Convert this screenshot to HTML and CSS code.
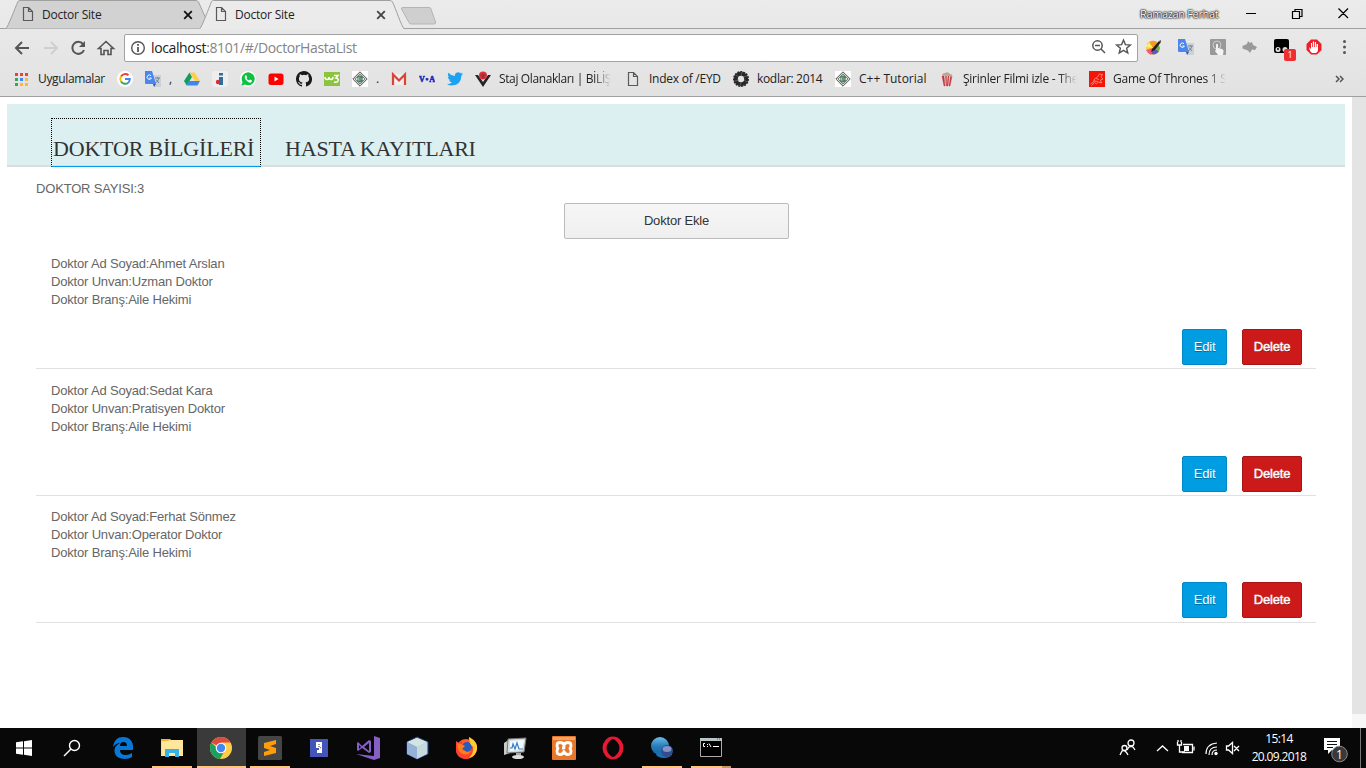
FILE: index.html
```html
<!DOCTYPE html>
<html lang="tr">
<head>
<meta charset="utf-8">
<title>Doctor Site</title>
<link rel="stylesheet" href="styles.css">
</head>
<body>
<svg class="defs" width="0" height="0">
  <symbol id="page" viewBox="0 0 12 14"><path d="M1.500 .5h5l4 4v9h-9zM6.500 .5v4h4" fill="none" stroke="#5a5a5a" stroke-width="1.200"/></symbol>
  <symbol id="x" viewBox="0 0 10 10"><path d="M1.200 1.200l7.600 7.600M8.800 1.200l-7.600 7.600" stroke="currentColor" stroke-width="1.800"/></symbol>
  <symbol id="translate" viewBox="0 0 16 16"><path d="M6 4h10v12H9z" fill="#ccd1d8"/><path d="M0 0h7l4 13H1Q0 13 0 12z" fill="#4a86ed"/><path d="M8 13h3l-2 3z" fill="#3059af"/><path d="M6 4.700A2.200 2.200 0 1 0 6.400 7H4.500" fill="none" stroke="#fff"/><path d="M10 7h5M12.500 6v1M14 7q-1 4-4 5M11 8.500l3 3.500" fill="none" stroke="#687b91" stroke-width=".9"/></symbol>
  <symbol id="cpp" viewBox="0 0 16 16"><path d="M0 0h16v16H0z" fill="#fff"/><path d="M8 .8L15.200 8 8 15.200 .8 8z" fill="#eee" stroke="#444" stroke-width=".9"/><path d="M8 2.800L13.200 8 8 13.200 2.800 8z" fill="#dce6df" stroke="#333" stroke-width=".7"/><path d="M5 5.500q3-2 6 0v5q-3 2-6 0z" fill="#548467"/><path d="M7.500 7h-1.500v2h1.500M8.500 8h1M10 8h1" stroke="#fff" stroke-width=".6" fill="none"/></symbol>
</svg>
<header class="browser">
  <div class="tabstrip">
    <svg class="tab-shapes" width="440" height="29">
      <path d="M6 28.500C8 27 15 8 18 1.500q.5-1 2-1h176q1.500 0 2.500 1.500l8 18-3.500 8.500" fill="#d2d2d2" stroke="#a0a0a0"/>
      <path d="M200 29c2-2 9-21 11.500-27.500q.5-1 2-1H390q1.500 0 2.500 1.500c3 6 9 24 11.500 27z" fill="#ebebeb"/>
      <path d="M200 28.500c2-2 9-20.500 11.500-27q.5-1 2-1H390q1.500 0 2.500 1.500c3 6 9 24.500 11.500 26.500" fill="none" stroke="#a0a0a0"/>
      <path d="M403 7.500h26q1.500 0 2 1.500l4.500 13q.5 2-1.500 2h-23q-1.500 0-2-1.500L401.500 9q-.5-1.500 1.500-1.500z" fill="#cfcfcf" stroke="#b5b5b5"/>
    </svg>
    <div class="tab"><svg class="page-icon"><use href="#page"/></svg><span>Doctor Site</span><svg class="close"><use href="#x"/></svg></div>
    <div class="tab tab-active"><svg class="page-icon"><use href="#page"/></svg><span>Doctor Site</span><svg class="close"><use href="#x"/></svg></div>
    <span class="user">Ramazan Ferhat</span>
    <svg class="window-controls" width="110" height="28" fill="none" stroke="#000"><path d="M4 13.500h10M50.500 11.500h7v7h-7zM53 11V9.500h7v7h-2M96.500 8.500l9.500 9.500M106 8.500L96.500 18" stroke-width="1.200"/></svg>
  </div>
  <div class="toolbar">
    <svg class="nav" width="104" height="18" viewBox="0 0 104 18" fill="none" stroke="#555" stroke-width="2">
      <path d="M15 9H2M8 3L2 9l6 6"/><path d="M30 9h12M37 3l6 6-6 6" stroke="#cfcfcf"/>
      <path d="M69 5a6 6 0 1 0 1 6"/><path d="M71 2v6h-6z" fill="#555" stroke="none"/>
      <path d="M84.500 9.500L92 2.500l7.500 7H97v6h-3v-4h-4v4h-3v-6z" stroke-width="1.600"/>
    </svg>
    <div class="address">
      <svg width="16" height="16" fill="none" stroke="#555" stroke-width="1.400"><circle cx="8" cy="8" r="6.300"/><path d="M8 7v5M8 4v1.700" stroke-width="1.800"/></svg>
      <span class="url"><b>localhost</b>:8101/#/DoctorHastaList</span>
      <svg class="address-actions" width="46" height="18" fill="none" stroke="#555" stroke-width="1.500"><circle cx="8.500" cy="7.500" r="4.700"/><path d="M12 11l4 4M6 7.500h5"/><path d="M34.500 2l1.900 4.600 5 .4-3.800 3.200 1.200 4.800-4.300-2.600-4.300 2.600 1.200-4.800-3.800-3.200 5-.4z" stroke-width="1.400"/></svg>
    </div>
    <div class="extensions">
      <svg viewBox="0 0 16 16"><circle cx="7" cy="9" r="6.800" fill="#ffc928"/><path d="M7 9L1 5A7 7 0 0 1 12 4z" fill="#f79a24"/><path d="M7 9L3 3l-3 5z" fill="#fff06a"/><path d="M7 9L5 15A7 7 0 0 0 13 12z" fill="#6554c0"/><path d="M7 9L0 11q2 4 5 5z" fill="#f05a78"/><path d="M12 4l2 5-1 3-4-2z" fill="#68b84a"/><path d="M6 10l7-8 2 1-6 8-4 2z" fill="#222"/><path d="M13 2l2-1v2z" fill="#555"/></svg>
      <svg><use href="#translate"/></svg>
      <svg viewBox="0 0 16 16"><rect width="16" height="16" rx="1" fill="#999"/><circle cx="7" cy="6" r="4" fill="none" stroke="#ccc"/><path d="M6 5.500q1-1.500 2 0V9l4 1q2 .5 1.500 2.500L13 16H8l-3-4q0-1.500 1-.5z" fill="#f3f3f3"/></svg>
      <svg viewBox="0 0 16 16"><path d="M.5 7L5 5l1-3 2 2 2-1 1 3 4 2-2 3-3-.5-2 3.500-2-2.500-3-1-2.500-1z" fill="#999"/></svg>
      <svg viewBox="0 0 16 16"><rect width="15" height="14" rx="2"/><circle cx="4" cy="10.500" r="2.500" fill="#ddd"/><circle cx="11" cy="10.500" r="2.500" fill="#ddd"/><circle cx="4" cy="10" r="1"/></svg>
      <svg viewBox="0 0 16 16"><path d="M5 .5h6L15.500 5v6L11 15.500H5L.5 11V5z" fill="#ed2027"/><path d="M5 4v6l-2-2 1 4 2 2h4q2-1 2-3V5h-1.500v3H10V3H8.800v5H8V2.500H6.800V8H6V4z" fill="#fff"/></svg>
      <svg viewBox="0 0 16 16" fill="#555"><circle cx="6.500" cy="2.500" r="1.500"/><circle cx="6.500" cy="8" r="1.500"/><circle cx="6.500" cy="13.500" r="1.500"/></svg>
      <span class="badge">1</span>
    </div>
  </div>
  <nav class="bookmarks">
    <svg class="apps" viewBox="0 0 13 13"><path d="M0 0h3v3H0zM5 0h3v3H5zM10 0h3v3h-3z" fill="#ee4035"/><path d="M0 5h3v3H0z" fill="#34a853"/><path d="M5 5h3v3H5z" fill="#4285f4"/><path d="M10 5h3v3h-3zM5 10h3v3H5zM10 10h3v3h-3z" fill="#f9bb2d"/><path d="M0 10h3v3H0z" fill="#34a853"/></svg>
    <span class="apps-label">Uygulamalar</span>
    <svg viewBox="0 0 16 16"><circle cx="8" cy="8" r="8" fill="#fff"/><g fill="none" stroke-width="2"><path d="M4 5.500a5 5 0 0 1 7.500-1.300" stroke="#ea4335"/><path d="M4 10.500a5 5 0 0 1 0-5" stroke="#fbbc05"/><path d="M11.300 11.700A5 5 0 0 1 4 10.500" stroke="#34a853"/><path d="M8 8h4.800q0 2.300-1.500 3.700" stroke="#4285f4"/></g></svg>
    <svg><use href="#translate"/></svg><span class="dot">,</span>
    <svg viewBox="0 0 16 16"><path d="M5.500 1.500L8 6 2.700 14.500 0 10z" fill="#169c5a"/><path d="M5.500 1.500h5L16 10h-5z" fill="#ffcf43"/><path d="M5 10h11l-2.500 4.500H2.700z" fill="#4285ed"/></svg>
    <svg viewBox="0 0 16 16"><rect width="16" height="16" rx="3" fill="#eee"/><path d="M7 2h4v2.500H7zM7 6h4v8H7z" fill="#316c9c"/><circle cx="6" cy="11" r="2.200" fill="#e22a32"/></svg>
    <svg viewBox="0 0 16 16"><circle cx="8" cy="8" r="8" fill="#fff"/><path d="M1.500 14.500l1-3.500A6.500 6.500 0 1 1 5 13.500z" fill="#0dc143"/><path d="M5 4.500l1.200-.3 1 2-.7 1q1 1.700 2.500 2.300l1-.9 2 1-.4 1.200Q10 12.800 7 10 4 7.500 5 4.500z" fill="#fff"/></svg>
    <svg viewBox="0 0 16 16"><rect x=".5" y="2.500" width="15" height="11.500" rx="2.500" fill="#f00"/><path d="M6.500 5.500v5l4-2.500z" fill="#fff"/></svg>
    <svg viewBox="0 0 16 16"><path d="M8 0C3.600 0 0 3.600 0 8c0 3.540 2.290 6.530 5.470 7.590.4.070.55-.17.550-.38v-1.490c-2 .37-2.530-.49-2.690-.94-.09-.23-.48-.94-.82-1.130-.28-.15-.68-.52-.01-.53.630-.01 1.080.58 1.230.82.720 1.210 1.870.87 2.330.66.070-.52.280-.87.510-1.070-1.780-.2-3.640-.89-3.640-3.950 0-.87.310-1.590.820-2.150-.08-.2-.36-1.020.08-2.120 0 0 .67-.21 2.200.82a7.600 7.600 0 0 1 4 0c1.530-1.040 2.200-.82 2.200-.82.440 1.100.16 1.920.08 2.120.510.560.820 1.270.820 2.150 0 3.070-1.870 3.750-3.650 3.950.290.250.540.730.540 1.480v2.200c0 .21.150.46.550.38A8 8 0 0 0 8 0z" fill="#161b1e"/></svg>
    <svg viewBox="0 0 16 16"><path d="M0 1h16v14H0z" fill="#8bc53f"/><path d="M1 6q0 2.500 2 2.500t2-2.500q0 2.500 2 2.500t2-2.500M10 4.500h4l-2 2.500q3 .5 2 3-1 2-4 1" fill="none" stroke="#fff" stroke-width="1.500"/></svg>
    <svg><use href="#cpp"/></svg><span class="dot">.</span>
    <svg viewBox="0 0 16 16"><path d="M1 3h14v11H1z" fill="#eee"/><path d="M2 14V3.500l6 6 6-6V14" fill="none" stroke="#d94436" stroke-width="2.200"/></svg>
    <svg viewBox="0 0 16 16"><text x="0" y="11" class="voa" textLength="16">V•A</text></svg>
    <svg viewBox="0 0 16 16"><path d="M0 13q3 0 5-1.500-2.300-.5-3-2.300h1.400Q.8 8 .8 5.600l1.500.4Q0 4 1.400 1.700q2.700 3.200 6.600 3.400Q7.500 1.600 11 1.200q1.500 0 2.500 1l2-.7-1.200 1.800L16 3l-1.600 1.700Q14 14 5 14.500 2 14.500 0 13z" fill="#1da1f2"/></svg>
    <svg viewBox="0 0 16 16"><path d="M0 4h3l5 7 5-7h3L8 16z" fill="#292426"/><circle cx="8" cy="4.500" r="4" fill="#df3440"/><path d="M5 4h6M6 6h4M8 2v6" stroke="#81252d" stroke-width=".7"/></svg>
    <span class="bookmark-label fade staj">Staj Olanakları | BİLİŞİ</span>
    <svg class="page-icon"><use href="#page"/></svg><span class="bookmark-label eyd">Index of /EYD</span>
    <svg viewBox="0 0 16 16"><circle cx="8" cy="8" r="5.200" fill="none" stroke="#292929" stroke-width="4"/><circle cx="8" cy="8" r="7.200" fill="none" stroke="#292929" stroke-width="1.600" stroke-dasharray="2 1"/><path d="M3 4l3 2M9 1l-1 4M14 5l-4 1M14 11l-3-2M7 15l1-4M2 10l4-1" stroke="#777" stroke-width=".6"/></svg><span class="bookmark-label kod">kodlar: 2014</span>
    <svg><use href="#cpp"/></svg><span class="bookmark-label tutorial">C++ Tutorial</span>
    <svg viewBox="0 0 16 16"><path d="M3 5h10l-2 10H5z" fill="#eee"/><path d="M3 5h2l1 10H5zM6.500 5h1v10H7zM9 5h1l-1 10H8zM11.500 5H13l-2 10h-1z" fill="#c2323a" stroke="#c2323a" stroke-width=".4"/><path d="M3 5q0-3 3-3 3-2 5 1 3 0 2 3-5-2-10-1z" fill="#b8a796"/></svg><span class="bookmark-label fade sirin">Şirinler Filmi izle - The</span>
    <svg viewBox="0 0 16 16"><path d="M0 0h16v16H0z" fill="#f31507"/><path d="M1.500 13l3-2 1-3 3-2 2-3 3 .5-1.500 2.500 2 2-2.500 1 1 3-3-1-2 2-2-1.500-3 3M7 7.500l3 1M5 10l4 .5" fill="none" stroke="#ff9a8c" stroke-width=".8"/></svg><span class="bookmark-label fade game">Game Of Thrones 1 S</span>
    <svg class="more" viewBox="0 0 9 8"><path d="M1 1l3 3-3 3M5 1l3 3-3 3" fill="none" stroke="#555" stroke-width="1.500"/></svg>
  </nav>
</header>
<main class="viewport">
  <div class="page">
    <nav class="menu"><a class="menu-item selected">DOKTOR BİLGİLERİ</a><a class="menu-item">HASTA KAYITLARI</a></nav>
    <section class="content">
      <p class="count">DOKTOR SAYISI:3</p>
      <button class="add">Doktor Ekle</button>
      <article class="doctor"><p>Doktor Ad Soyad:Ahmet Arslan<br>Doktor Unvan:Uzman Doktor<br>Doktor Branş:Aile Hekimi</p><div class="actions"><button class="edit">Edit</button><button class="delete">Delete</button></div></article>
      <article class="doctor second"><p>Doktor Ad Soyad:Sedat Kara<br>Doktor Unvan:Pratisyen Doktor<br>Doktor Branş:Aile Hekimi</p><div class="actions"><button class="edit">Edit</button><button class="delete">Delete</button></div></article>
      <article class="doctor third"><p>Doktor Ad Soyad:Ferhat Sönmez<br>Doktor Unvan:Operator Doktor<br>Doktor Branş:Aile Hekimi</p><div class="actions"><button class="edit">Edit</button><button class="delete">Delete</button></div></article>
    </section>
  </div>
  <div class="scrollbar"><div class="track"></div></div>
</main>
<footer class="taskbar">
  <div class="task start"><svg width="16" height="16" fill="#fff"><path d="M0 2.300L7 1.300V7.500H0zM8 1.200L16 0v7.500H8zM0 8.500h7v6.200l-7-1zM8 8.500h8V16l-8-1.200z"/></svg></div>
  <div class="task search"><svg width="18" height="18" fill="none" stroke="#fff" stroke-width="1.400"><circle cx="11.500" cy="6.500" r="5"/><path d="M8 10l-7 7"/></svg></div>
  <div class="task"><svg viewBox="0 0 24 24"><path d="M2 11C3 4 7 1 12 1c7 0 10 5 10 9v4H9c0 3 2 5 6 5q3 0 6-2v4q-3 2-7 2C7 23 3 19 3.500 14 4 10 7 8 9 7q-4 0-7 4zm7-1h7q0-4-3.500-4T9 10z" fill="#0878d7"/></svg></div>
  <div class="task open"><svg viewBox="0 0 24 24"><path d="M1 3h9l2 2h11v15H1z" fill="#f9dc83"/><path d="M1 3h9v2H1z" fill="#eab72e"/><path d="M2 6l9-2h12v16H2z" fill="#fee69a"/><path d="M5 21v-8h14v8h-4v-4H9v4z" fill="#38b1e6"/></svg></div>
  <div class="task open focused"><svg viewBox="0 0 24 24"><circle cx="12" cy="12" r="11" fill="#ffcd46"/><path d="M12 12L2.500 6.500A11 11 0 0 1 21.500 6.500H12z" fill="#dd4b3e"/><path d="M2.500 6.500A11 11 0 0 0 11 23l5-9-4 2z" fill="#1aa15f"/><circle cx="12" cy="12" r="5.300" fill="#fff"/><circle cx="12" cy="12" r="4.200" fill="#4387f5"/></svg></div>
  <div class="task open"><svg viewBox="0 0 24 24"><rect width="24" height="24" rx="1.500" fill="#454545"/><path d="M6 7l12-3v4l-6 2 6 2v5L6 20v-4l6-2-6-2z" fill="#ff9c08"/></svg></div>
  <div class="task"><svg viewBox="0 0 24 24"><path d="M3 3h18v18H3z" fill="#4355ba"/><path d="M9 6h6v11h-5v-3h2v-2H9z" fill="#fff"/><path d="M12 8v3l2 1" stroke="#333" fill="none" stroke-dasharray="1 1"/></svg></div>
  <div class="task"><svg viewBox="0 0 24 24"><path d="M18 0l6 2v20l-6 2L0 18l18 2z" fill="#865fc5"/><path d="M2 6l4 4 7-6 2 1v11l-2 1-7-5-4 3-1-1V7zm1 3v4l2-2zm5 2l5 4V7z" fill="#865fc5" fill-rule="evenodd"/></svg></div>
  <div class="task"><svg viewBox="0 0 24 24"><path d="M12 1l11 5v12l-11 5-10-5V6z" fill="#a7c1df" stroke="#263d87"/><path d="M2 6l10-4 10 4-10 5z" fill="#d2e5df"/><path d="M12 11l10-5v12l-10 5z" fill="#c5d9df"/><path d="M2 6l10 5v12L2 18z" fill="#96b1d6"/></svg></div>
  <div class="task"><svg viewBox="0 0 24 24"><circle cx="12" cy="13" r="10" fill="#ff5b2c"/><path d="M2 14V5l3 2 3-3v4l5 2-3 3 4 3q4 0 4-5c0-4-4-5-3-10 6 3 9 7 8 13-1 5-6 9-11 9-6 0-10-4-10-9z" fill="#ff412e"/><circle cx="13" cy="11" r="5" fill="#275bbd"/><path d="M15 1q9 5 8 12-1 7-8 9 5-5 4-11-4-3-4-10z" fill="#ffcc2d"/><path d="M3 7l4 1 4 2-3 3 5 3q3 0 4-2-2 6-8 4-6-2-6-11z" fill="#ff7c1c"/></svg></div>
  <div class="task"><svg viewBox="0 0 24 24"><path d="M1 7l6-4v14l-6 2z" fill="#c8cbc6"/><path d="M5 3l18-1-2 14-17 1z" fill="#d5dcdc" stroke="#777"/><path d="M7 5l14-1-2 10-12 1z" fill="#f0fbff"/><path d="M7 12h2l1-4 2 5 2-6 2 6h4" fill="none" stroke="#397cc0" stroke-width="1.200"/><path d="M13 17h5v3h-5z" fill="#aaa"/><ellipse cx="15" cy="21" rx="6" ry="2" fill="#ddd"/></svg></div>
  <div class="task"><svg viewBox="0 0 24 24"><rect width="24" height="24" rx="1" fill="#e9772a"/><path d="M1 1h22v3H1z" fill="#f6a365"/><path d="M12 9Q11 6.500 8 6.500q-3 0-3 3 0 1.500 1 3-1 1-1 3 0 3 3 3t4-3q1 3 4 3t3-3q0-2-1-3 1-1.500 1-3 0-3-3-3t-4 2.500v3h-2" fill="none" stroke="#fff" stroke-width="2.800" stroke-linejoin="round"/></svg></div>
  <div class="task"><svg viewBox="0 0 24 24"><ellipse cx="12" cy="12" rx="8.500" ry="9.500" fill="none" stroke="#e61932" stroke-width="4"/><ellipse cx="12" cy="12" rx="5" ry="9" fill="#080808"/></svg></div>
  <div class="task open"><svg viewBox="0 0 24 24"><defs><linearGradient id="blue" x2="0" y2="1"><stop stop-color="#6cbceb"/><stop offset=".5" stop-color="#297eb9"/><stop offset="1" stop-color="#1661a1"/></linearGradient></defs><circle cx="10" cy="10" r="9" fill="url(#blue)"/><ellipse cx="14" cy="18" rx="8" ry="4" fill="#1c70b1"/><circle cx="17" cy="15" r="6" fill="#334c91"/><ellipse cx="17" cy="13" rx="4.500" ry="3" fill="#8193c7"/></svg></div>
  <div class="task open terminal"><svg viewBox="0 0 24 24"><path d="M1.500 2.500h21v18h-21z" fill="#000" stroke="#aaa"/><path d="M1 2h22v3H1z" fill="#b9c4c7"/><path d="M6 7.500H4.500v3H6M8.500 8v1M8.500 10v1M10 7.500l2 3.500M14 10.500h6" fill="none" stroke="#fff"/><path d="M18 3h1M20 3h1" stroke="#555"/></svg></div>
  <svg class="tray" width="128" height="24" fill="none" stroke="#fff" stroke-width="1.300"><circle cx="14" cy="7" r="3"/><path d="M10 14l2-3q2-1 4 0l2 3M3 19l2-4q3-2 6 4"/><circle cx="7.500" cy="12" r="2.500"/><path d="M40 15l5.500-5 5.500 5M66 8.500h9.500v8H65"/><path d="M67 10h5v5h-5z" fill="#fff" stroke="none"/><path d="M60.500 6v3h4V6M62.500 9v7H68M61 6V4M64 6V4M77 10.500v4"/><path d="M89 18q0-10 11-11M92 19q0-8 8-8M95 19q0-5 5-5" stroke-width="1.200"/><circle cx="99" cy="17.500" r="1.700" fill="#fff" stroke="none"/><path d="M109.500 10h2l4-3.500v11l-4-3.500h-2zM117 10l5 5M122 10l-5 5"/></svg>
  <div class="clock"><span>15:14</span><span>20.09.2018</span></div>
  <svg class="notice" width="28" height="28"><path d="M1 1h16v12H9l-4 4v-4H1z" fill="#fff"/><path d="M4 4.500h10M4 7.500h10M4 10.500h6" stroke="#111"/><circle cx="16.500" cy="17" r="7.800" fill="#393939" stroke="#888"/><text x="16.500" y="21.500" text-anchor="middle">1</text></svg>
</footer>
</body>
</html>
```
FILE: styles.css
```css
* { box-sizing: border-box; }
body { margin: 0; width: 1366px; height: 768px; overflow: hidden; display: flex; flex-direction: column; background: #fff; font-family: "Liberation Sans", Arial, sans-serif; }
svg { display: block; flex: none; }
p { margin: 0; }
.defs { position: absolute; }
.browser { height: 97px; flex: none; background: linear-gradient(#ebebeb, #e2e2e2); border-bottom: 1px solid #a0a0a0; font: 12px "Open Sans", sans-serif; color: #222; }
.tabstrip { position: relative; height: 29px; display: flex; align-items: center; border-bottom: 1px solid #a0a0a0; }
.tab-shapes { position: absolute; left: 0; top: 0; }
.tab { position: relative; display: flex; align-items: center; width: 193px; height: 28px; padding-left: 22px; }
.tab span { margin-left: 8px; width: 142px; letter-spacing: -.22px; padding-top: 1px; }
.tab .close { width: 10px; height: 10px; color: #111; margin: 1px 0 0 1px; }
.tab-active .close { color: #444; }
.page-icon { width: 12px; height: 14px; }
.user { margin-left: 754px; width: 90px; font-size: 11px; letter-spacing: -.35px; color: #fff; text-shadow: 0 0 2px #000, 0 0 2px #000, 0 0 1px #000; white-space: nowrap; padding-bottom: 2px; }
.window-controls { margin-left: 12px; }
.toolbar { height: 36px; display: flex; align-items: center; padding: 1px 0 0 14px; }
.address { margin-left: 6px; width: 1014px; height: 28px; display: flex; align-items: center; background: #fff; border: 1px solid #a2a2a2; border-radius: 2px; padding-left: 5px; }
.url { font-size: 14px; margin-left: 5px; color: #858585; letter-spacing: -.39px; width: 938px; padding-bottom: 1px; }
.url b { font-weight: 400; color: #222; }
.address-actions { margin-top: -1px; }
.extensions { position: relative; display: flex; gap: 16px; margin-left: 8px; margin-top: -1px; }
.extensions svg { width: 16px; height: 16px; }
.badge { position: absolute; left: 138px; top: 10px; width: 12px; height: 12px; background: #ef2e32; color: #fff; border-radius: 2px; font-size: 9px; line-height: 12px; text-align: center; }
.bookmarks { height: 30px; display: flex; align-items: center; padding-left: 15px; padding-bottom: 2px; white-space: nowrap; }
.bookmarks > svg { width: 16px; height: 16px; margin-right: 12px; }
.bookmarks > .apps { width: 13px; height: 13px; margin-right: 10px; }
.bookmarks > span { padding-bottom: 1px; }
.apps-label { width: 79px; letter-spacing: -.35px; }
.dot { width: 15px; margin-left: -4px; }
.voa { font: bold 8px "Liberation Serif", serif; fill: #1426c1; stroke: #1426c1; stroke-width: .5; }
.bookmark-label { margin-left: -4px; letter-spacing: -.25px; }
.staj { width: 112px; margin-right: 16px; letter-spacing: -.38px; }
.bookmarks > .page-icon { width: 12px; height: 14px; margin-right: 14px; }
.eyd { width: 84px; }
.kod { width: 78px; letter-spacing: -.33px; }
.tutorial { width: 80px; letter-spacing: 0; }
.sirin { width: 114px; margin-right: 12px; }
.game { width: 113px; margin-right: 109px; }
.fade { -webkit-mask-image: linear-gradient(90deg, #000 84%, transparent); mask-image: linear-gradient(90deg, #000 84%, transparent); }
.bookmarks > .more { width: 9px; height: 8px; margin: 0; }
.viewport { height: 631px; flex: none; display: flex; }
.page { width: 1352px; padding: 7px 7px 0; }
.menu { display: flex; height: 63px; gap: 24px; background: #dcf0f2; border-bottom: 2px solid #dadddd; padding: 14px 0 0 44px; }
.menu-item { height: 49px; padding-top: 17px; font: 22px/27px "Liberation Serif", serif; color: #333; white-space: nowrap; letter-spacing: -.19px; }
.selected { width: 210px; border: 1px dotted #000; border-bottom: 1px solid #009ee8; padding-left: 1px; padding-top: 16px; }
.content { width: 1280px; margin-left: 29px; color: #666; font-size: 13px; line-height: 18px; letter-spacing: -.18px; display: flex; flex-direction: column; padding-top: 13px; }
.count { height: 23px; }
button { font: 13px "Liberation Sans", Arial, sans-serif; padding: 0 0 2px; height: 36px; border-radius: 2px; letter-spacing: -.18px; }
.add { width: 225px; margin-left: 528px; border: 1px solid #bbb; background: linear-gradient(#f6f6f6, #efefef); color: #333; }
.doctor { height: 130px; padding: 16px 14px 0 15px; border-bottom: 1px solid #e1e1e1; }
.second { height: 127px; padding-top: 13px; }
.third { height: 127px; padding-top: 12px; }
.actions { margin-top: 20px; display: flex; justify-content: flex-end; gap: 15px; }
.edit { width: 45px; border: 1px solid #0087c6; background: #009de3; color: #fff; text-shadow: 0 1px #0070a3; }
.delete { width: 60px; border: 1px solid #a91515; background: #cc1a1a; color: #fff; text-shadow: 0 1px #871212; -webkit-text-stroke: .4px #fff; }
.scrollbar { width: 14px; background: #f7f7f7; }
.track { height: 617px; background: #e4e4e4; }
.taskbar { height: 40px; flex: none; display: flex; align-items: center; background: #080808; color: #fff; }
.task { width: 49px; height: 40px; display: flex; align-items: center; justify-content: center; }
.task svg { width: 24px; height: 24px; margin-right: 2px; }
.start, .search { width: 48px; }
.start svg { width: 16px; height: 16px; margin: 0; }
.search { margin-right: 3px; }
.search svg { width: 18px; height: 18px; margin: 0; }
.open { background: linear-gradient(#ffc480, #ffc480) 4px 38px / 40px 2px no-repeat; }
.focused { background: linear-gradient(#ffc480, #ffc480) 0 38px / 49px 2px no-repeat #3a3a3a; }
.terminal { background: linear-gradient(90deg, #ffc480 31px, #c49761 31px) 4px 38px / 40px 2px no-repeat; }
.tray { margin-left: 381px; }
.clock { display: flex; flex-direction: column; align-items: center; width: 68px; font: 12px/18px "Open Sans", sans-serif; letter-spacing: -.65px; margin-top: -1px; }
.notice { margin: 6px 0 0 10px; }
.notice text { font: 12px "Open Sans", sans-serif; fill: #fff; }
.taskbar::after { content: ""; width: 1px; height: 40px; margin-left: 9px; background: #777; }
```
